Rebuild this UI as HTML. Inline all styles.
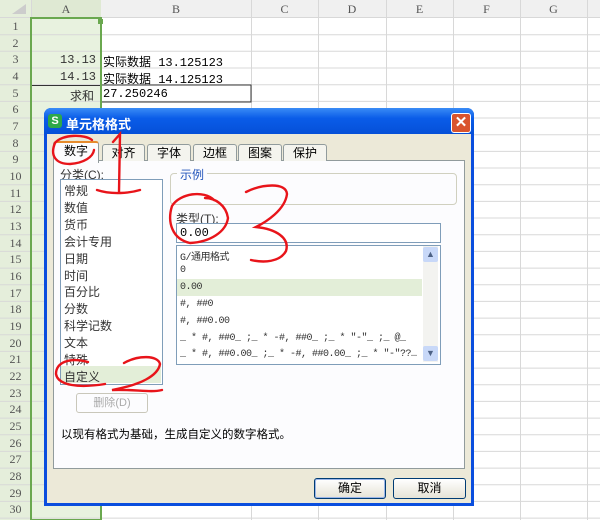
<!DOCTYPE html>
<html><head><meta charset="utf-8"><style>
body{margin:0;width:600px;height:520px;overflow:hidden;background:#fff;font-family:"Liberation Sans","Noto Sans CJK SC",sans-serif;position:relative}
.abs{position:absolute}
.t{font-size:12px;color:#000;white-space:nowrap}
.m{font-family:"Liberation Mono","Noto Sans CJK SC",monospace}
</style></head><body>
<svg class="abs" style="left:0;top:0" width="600" height="520">
<rect x="0" y="0" width="600" height="18" fill="#f0f0f0"/>
<rect x="0" y="0" width="31" height="520" fill="#e5eedb"/>
<rect x="31" y="0" width="70" height="18" fill="#dfe9d3"/>
<rect x="31" y="18" width="70" height="502" fill="#e8f2df"/>
<g stroke="#d8d8d8" stroke-width="1">
<line x1="0" y1="17.5" x2="600" y2="17.5"/>
<line x1="251.5" y1="0" x2="251.5" y2="520"/><line x1="318.5" y1="0" x2="318.5" y2="520"/>
<line x1="386.5" y1="0" x2="386.5" y2="520"/><line x1="453.5" y1="0" x2="453.5" y2="520"/>
<line x1="520.5" y1="0" x2="520.5" y2="520"/><line x1="587.5" y1="0" x2="587.5" y2="520"/>
<line x1="31.5" y1="0" x2="31.5" y2="520"/>
</g>
<g stroke="#d8d8d8" id="rows"></g>
<rect x="101" y="85" width="150" height="17" fill="none" stroke="#333"/>
<line x1="31" y1="85.5" x2="101" y2="85.5" stroke="#333"/>
<rect x="31" y="18" width="70" height="502" fill="none" stroke="#6aa84f" stroke-width="2"/>
<rect x="98" y="19" width="5" height="5" fill="#6aa84f"/>
<polygon points="12,14 26,14 26,4" fill="#ccc"/>
</svg>
<div id="hdr"></div>
<div class="abs t m" style="left:60px;top:53px;color:#333">13.13</div>
<div class="abs t m" style="left:60px;top:70px;color:#333">14.13</div>
<div class="abs t" style="left:70px;top:87px;color:#333">求和</div>
<div class="abs t m" style="left:103px;top:53px">实际数据 13.125123</div>
<div class="abs t m" style="left:103px;top:70px">实际数据 14.125123</div>
<div class="abs t m" style="left:103px;top:87px">27.250246</div>

<div class="abs" style="left:44px;top:108px;width:430px;height:398px;background:#0a4ede;border-radius:7px 7px 0 0"></div>
<div class="abs" style="left:44px;top:108px;width:430px;height:26px;background:linear-gradient(#3a8cf6,#0a5ce8 40%,#0550d8);border-radius:7px 7px 0 0"></div>
<div class="abs" style="left:48px;top:114px;width:14px;height:14px;background:#2ea84a;border-radius:3px;color:#fff;font-size:11px;font-weight:bold;text-align:center;line-height:14px">S</div>
<div class="abs t" style="left:66px;top:114px;color:#fff;font-weight:bold;font-size:13px">单元格格式</div>
<div class="abs" style="left:451px;top:113px;width:18px;height:18px;background:#d9542e;border:1px solid #fff;border-radius:3px;color:#fff;text-align:center;line-height:18px;font-size:15px;font-weight:bold">✕</div>
<div class="abs" style="left:47px;top:134px;width:424px;height:369px;background:#ece9d8"></div>
<div class="abs" style="left:53px;top:160px;width:410px;height:307px;background:#fcfcfe;border:1px solid #919b9c"></div>
<div id="tabs"></div>
<div class="abs t" style="left:60px;top:166px;color:#333">分类(C):</div>
<div class="abs" style="left:60px;top:179px;width:101px;height:204px;background:#fff;border:1px solid #7f9db9"></div>
<div class="abs" style="left:61px;top:366px;width:100px;height:17px;background:#e3eed8"></div>
<div id="cats"></div>
<div class="abs" style="left:76px;top:393px;width:70px;height:18px;border:1px solid #c9c7ba;border-radius:3px;color:#aaa;font-size:11px;text-align:center;line-height:18px">删除(D)</div>
<div class="abs" style="left:170px;top:173px;width:285px;height:30px;border:1px solid #d0d0bf;border-radius:4px"></div>
<div class="abs t" style="left:177px;top:166px;color:#2255bb;background:#fcfcfe;padding:0 3px">示例</div>
<div class="abs t" style="left:176px;top:210px;color:#333">类型(T):</div>
<div class="abs" style="left:176px;top:223px;width:263px;height:18px;background:#fff;border:1px solid #7f9db9"></div>
<div class="abs t m" style="left:180px;top:226px">0.00</div>
<div class="abs" style="left:176px;top:245px;width:263px;height:118px;background:#fff;border:1px solid #7f9db9"></div>
<div class="abs" style="left:177px;top:279px;width:245px;height:17px;background:#e3eed8"></div>
<div class="abs" style="left:177px;top:246px;width:245px;height:116px;overflow:hidden"><div id="types" style="position:relative;left:-177px;top:-246px"></div></div>
<div class="abs" style="left:423px;top:246px;width:15px;height:116px;background:#f3f3f0"></div>
<div class="abs" style="left:423px;top:247px;width:15px;height:15px;background:#c8d8f8;border-radius:2px;color:#4d6185;font-size:9px;text-align:center;line-height:15px">▲</div>
<div class="abs" style="left:423px;top:346px;width:15px;height:15px;background:#c8d8f8;border-radius:2px;color:#4d6185;font-size:9px;text-align:center;line-height:15px">▼</div>
<div class="abs t" style="left:61px;top:426px;font-size:11.5px">以现有格式为基础，生成自定义的数字格式。</div>
<div class="abs" style="left:314px;top:478px;width:70px;height:19px;border:1px solid #003c74;border-radius:3px;background:linear-gradient(#fff,#e6e3d6);box-shadow:inset 0 0 0 1px #9cb6e8;font-size:12px;text-align:center;line-height:19px">确定</div>
<div class="abs" style="left:393px;top:478px;width:71px;height:19px;border:1px solid #003c74;border-radius:3px;background:linear-gradient(#fff,#e6e3d6);font-size:12px;text-align:center;line-height:19px">取消</div>

<svg class="abs" style="left:0;top:0" width="600" height="520" fill="none" stroke="#e8141a" stroke-width="2.4" stroke-linecap="round">
<path d="M92,140 C85,134 62,134 55,143 C50,155 55,164 70,164 C84,163 93,157 94,150"/>
<path d="M113,142 L120,134 L119,192 M97,190 C112,195 130,193 140,190"/>
<path d="M246,192 C262,184 286,182 287,194 C285,210 266,222 256,227 C276,229 290,238 286,251 C280,262 264,263 251,260"/>
<path d="M214,200 C204,190 180,193 172,206 C167,222 172,239 190,243 C210,242 226,232 228,218 C226,205 215,198 205,198"/>
<path d="M124,363 C138,355 158,355 160,364 C158,376 140,385 112,390 C135,389 150,393 162,390"/>
<path d="M88,362 C70,357 56,362 56,374 C58,386 80,388 105,384"/>
</svg>
<script>
var g=document.getElementById('rows'),s='',h='';
for(var i=1;i<=31;i++){var y=18+i*16.67;s+='<line x1="0" y1="'+y.toFixed(1)+'" x2="600" y2="'+y.toFixed(1)+'"/>';}
g.innerHTML=s;
for(var i=1;i<=30;i++){var y=18+(i-1)*16.67;h+='<div class="abs" style="left:0;top:'+y+'px;width:31px;height:16px;text-align:center;font-size:12px;line-height:17px;color:#555;font-family:Liberation Serif,serif">'+i+'</div>';}
var cols=[['A',31,101],['B',101,251],['C',251,318],['D',318,386],['E',386,453],['F',453,520],['G',520,587]];
cols.forEach(function(c){h+='<div class="abs" style="left:'+c[1]+'px;top:2px;width:'+(c[2]-c[1])+'px;text-align:center;font-size:12px;color:#555;font-family:Liberation Serif,serif">'+c[0]+'</div>';});
document.getElementById('hdr').innerHTML=h;
var tabs=[['数字',53,44],['对齐',102,41],['字体',147,42],['边框',193,42],['图案',238,42],['保护',283,42]],t='';
tabs.forEach(function(a,i){t+='<div class="abs" style="left:'+a[1]+'px;top:'+(i?144:141)+'px;width:'+a[2]+'px;height:'+(i?16:20)+'px;background:'+(i?'#f4f4ee':'#fcfcfe')+';border:1px solid #919b9c;border-bottom:none;border-radius:3px 3px 0 0;'+(i?'':'border-top:2px solid #e68b2c;')+'font-size:12px;text-align:center;line-height:16px">'+a[0]+'</div>';});
document.getElementById('tabs').innerHTML=t;
var cats=['常规','数值','货币','会计专用','日期','时间','百分比','分数','科学记数','文本','特殊','自定义'],c='';
cats.forEach(function(a,i){c+='<div class="abs t" style="left:64px;top:'+(182+i*16.9)+'px;color:#333">'+a+'</div>';});
document.getElementById('cats').innerHTML=c;
var ty=['G/通用格式','0','0.00','#, ##0','#, ##0.00','_ * #, ##0_ ;_ * -#, ##0_ ;_ * "-"_ ;_ @_','_ * #, ##0.00_ ;_ * -#, ##0.00_ ;_ * "-"??…'],d='';
ty.forEach(function(a,i){d+='<div class="abs t m" style="left:180px;top:'+(248+i*16.9)+'px;font-size:10px;color:#333;letter-spacing:-0.5px">'+a.replace(/</g,'&lt;')+'</div>';});
document.getElementById('types').innerHTML=d;
</script>
</body></html>
